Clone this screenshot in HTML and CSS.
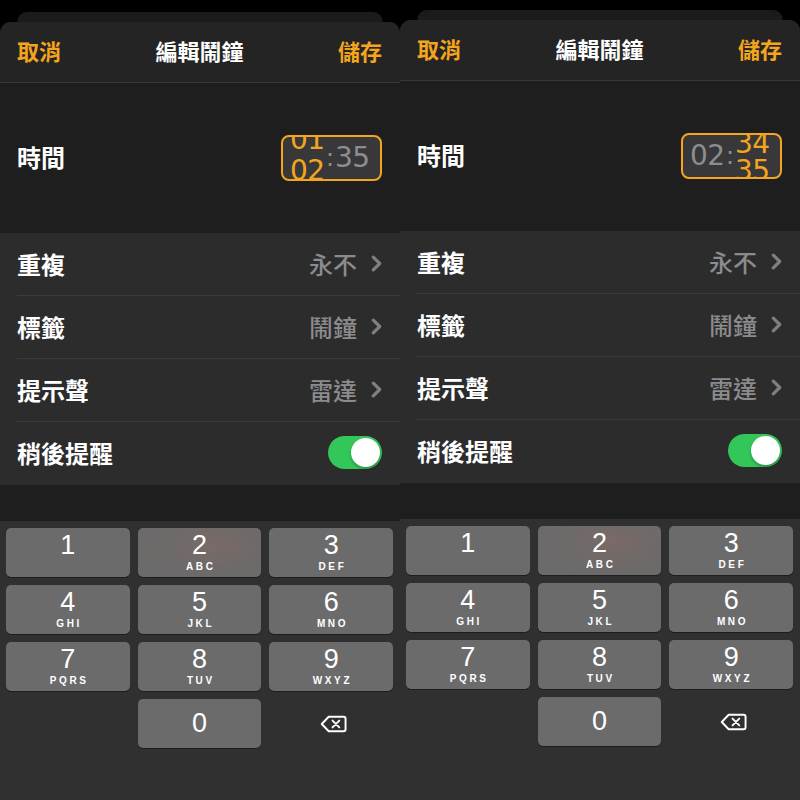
FILE: index.html
```html
<!DOCTYPE html>
<html lang="zh-Hant">
<head>
<meta charset="utf-8">
<title>編輯鬧鐘</title>
<link rel="stylesheet" href="styles.css">
</head>
<body>
<div class="screens">
  <section class="panel">
    <div class="top"><div class="back-sheet"></div></div>
    <div class="sheet">
      <header class="nav">
        <span class="nav-btn">取消</span>
        <span class="nav-title">編輯鬧鐘</span>
        <span class="nav-btn">儲存</span>
      </header>
      <div class="time-row">
        <span class="label">時間</span>
        <div class="picker">
          <div class="col col-scroll hours-left"><span>01</span><span>02</span></div>
          <span class="colon">:</span>
          <div class="col static">35</div>
        </div>
      </div>
      <ul class="list">
        <li class="row"><span class="label">重複</span><span class="value">永不<svg class="chev" viewBox="0 0 10 16"><polyline points="2,2 8,8 2,14"/></svg></span></li>
        <li class="row"><span class="label">標籤</span><span class="value">鬧鐘<svg class="chev" viewBox="0 0 10 16"><polyline points="2,2 8,8 2,14"/></svg></span></li>
        <li class="row"><span class="label">提示聲</span><span class="value">雷達<svg class="chev" viewBox="0 0 10 16"><polyline points="2,2 8,8 2,14"/></svg></span></li>
        <li class="row"><span class="label">稍後提醒</span><span class="toggle"><span class="knob"></span></span></li>
      </ul>
      <div class="band"></div>
      <div class="keyboard">
        <div class="key"><span class="d">1</span><span class="l"></span></div>
        <div class="key hot"><span class="d">2</span><span class="l">ABC</span></div>
        <div class="key"><span class="d">3</span><span class="l">DEF</span></div>
        <div class="key"><span class="d">4</span><span class="l">GHI</span></div>
        <div class="key"><span class="d">5</span><span class="l">JKL</span></div>
        <div class="key"><span class="d">6</span><span class="l">MNO</span></div>
        <div class="key"><span class="d">7</span><span class="l">PQRS</span></div>
        <div class="key"><span class="d">8</span><span class="l">TUV</span></div>
        <div class="key"><span class="d">9</span><span class="l">WXYZ</span></div>
        <div class="key blank"></div>
        <div class="key zero"><span class="d">0</span></div>
        <div class="key del"><svg viewBox="0 0 28 18"><path d="M9 1.5 H24.5 a2 2 0 0 1 2 2 V14.5 a2 2 0 0 1 -2 2 H9 L1.8 9 Z"/><path d="M13 5.5 L20 12.5 M20 5.5 L13 12.5"/></svg></div>
      </div>
    </div>
  </section>

  <section class="panel shifted">
    <div class="top"><div class="back-sheet"></div></div>
    <div class="sheet">
      <header class="nav">
        <span class="nav-btn">取消</span>
        <span class="nav-title">編輯鬧鐘</span>
        <span class="nav-btn">儲存</span>
      </header>
      <div class="time-row">
        <span class="label">時間</span>
        <div class="picker">
          <div class="col static">02</div>
          <span class="colon">:</span>
          <div class="col col-scroll mins-right"><span>34</span><span>35</span></div>
        </div>
      </div>
      <ul class="list">
        <li class="row"><span class="label">重複</span><span class="value">永不<svg class="chev" viewBox="0 0 10 16"><polyline points="2,2 8,8 2,14"/></svg></span></li>
        <li class="row"><span class="label">標籤</span><span class="value">鬧鐘<svg class="chev" viewBox="0 0 10 16"><polyline points="2,2 8,8 2,14"/></svg></span></li>
        <li class="row"><span class="label">提示聲</span><span class="value">雷達<svg class="chev" viewBox="0 0 10 16"><polyline points="2,2 8,8 2,14"/></svg></span></li>
        <li class="row"><span class="label">稍後提醒</span><span class="toggle"><span class="knob"></span></span></li>
      </ul>
      <div class="band"></div>
      <div class="keyboard">
        <div class="key"><span class="d">1</span><span class="l"></span></div>
        <div class="key hot"><span class="d">2</span><span class="l">ABC</span></div>
        <div class="key"><span class="d">3</span><span class="l">DEF</span></div>
        <div class="key"><span class="d">4</span><span class="l">GHI</span></div>
        <div class="key"><span class="d">5</span><span class="l">JKL</span></div>
        <div class="key"><span class="d">6</span><span class="l">MNO</span></div>
        <div class="key"><span class="d">7</span><span class="l">PQRS</span></div>
        <div class="key"><span class="d">8</span><span class="l">TUV</span></div>
        <div class="key"><span class="d">9</span><span class="l">WXYZ</span></div>
        <div class="key blank"></div>
        <div class="key zero"><span class="d">0</span></div>
        <div class="key del"><svg viewBox="0 0 28 18"><path d="M9 1.5 H24.5 a2 2 0 0 1 2 2 V14.5 a2 2 0 0 1 -2 2 H9 L1.8 9 Z"/><path d="M13 5.5 L20 12.5 M20 5.5 L13 12.5"/></svg></div>
      </div>
    </div>
  </section>
</div>
</body>
</html>
```

FILE: styles.css
```css
* { box-sizing: border-box; margin: 0; padding: 0; }

html, body {
  width: 800px;
  height: 800px;
  overflow: hidden;
  background: #000;
}

body {
  font-family: "Noto Sans CJK TC", "Noto Sans", sans-serif;
  color: #fff;
}

.screens {
  display: flex;
  width: 800px;
  height: 800px;
}

.panel {
  width: 400px;
  height: 800px;
  display: flex;
  flex-direction: column;
  overflow: hidden;
  background: #000;
}

.top {
  height: 22px;
  flex: none;
  padding: 12px 17px 0;
}
.panel.shifted .top {
  height: 20px;
  padding-top: 10px;
}

.back-sheet {
  height: 10px;
  background: #1b1b1b;
  border-radius: 10px 10px 0 0;
}

.sheet {
  flex: 1;
  display: flex;
  flex-direction: column;
  background: #1e1e1e;
  border-radius: 11px 11px 0 0;
  overflow: hidden;
}

.nav {
  height: 61px;
  flex: none;
  display: flex;
  align-items: center;
  justify-content: space-between;
  padding: 0 18px 4px 17px;
  background: #242424;
  border-bottom: 1px solid #393939;
}
.nav-btn {
  color: #f3a51d;
  font-size: 22px;
  font-weight: 700;
}
.nav-title {
  font-size: 22px;
  font-weight: 700;
  color: #fff;
}

.label {
  font-size: 24px;
  font-weight: 700;
  color: #fff;
}

.time-row {
  height: 150px;
  flex: none;
  display: flex;
  align-items: center;
  justify-content: space-between;
  padding: 0 18px 0 17px;
  background: #1e1e1e;
}
.time-row .label { margin-top: -3px; }

.picker {
  width: 101px;
  height: 46px;
  border: 2px solid #f3a51d;
  border-radius: 8px;
  background: #38383a;
  display: flex;
  align-items: center;
  padding-left: 7px;
  overflow: hidden;
  font-family: "DejaVu Sans", sans-serif;
  font-size: 28px;
  color: #8d8d90;
}

.col {
  width: 36px;
  line-height: 30px;
  letter-spacing: -0.5px;
}
.static { margin-top: -1px; }
.col-scroll {
  display: flex;
  flex-direction: column;
  color: #f3a51d;
  align-self: flex-start;
}
.hours-left { margin-top: -13px; line-height: 31px; }
.mins-right { margin-top: -5px; line-height: 27px; }

.colon {
  width: 8px;
  font-size: 24px;
  line-height: 28px;
  text-align: center;
  margin-top: -1px;
  margin-right: 1px;
}

.list {
  list-style: none;
  background: #2c2c2c;
  flex: none;
}
.row {
  height: 63px;
  display: flex;
  align-items: center;
  justify-content: space-between;
  margin-left: 17px;
  padding-right: 18px;
  padding-bottom: 2px;
  border-bottom: 1px solid #3c3c3c;
}
.row:last-child { border-bottom: none; height: 63px; }

.value {
  display: flex;
  align-items: center;
  gap: 14px;
  font-size: 24px;
  font-weight: 500;
  color: #8b8b8e;
}
.chev {
  width: 11px;
  height: 17px;
  fill: none;
  stroke: #7f7f83;
  stroke-width: 3;
  stroke-linecap: round;
  stroke-linejoin: round;
}

.toggle {
  width: 54px;
  height: 33px;
  border-radius: 17px;
  background: #33c659;
  display: flex;
  align-items: center;
  justify-content: flex-end;
  padding-right: 2px;
}
.knob {
  width: 29px;
  height: 29px;
  border-radius: 50%;
  background: #fff;
  box-shadow: 0 2px 3px rgba(0,0,0,0.25);
}

.band {
  height: 36px;
  flex: none;
  background: #1e1e1e;
}

.keyboard {
  flex: 1;
  background: #303030;
  display: grid;
  grid-template-columns: repeat(3, 1fr);
  grid-auto-rows: 49px;
  row-gap: 8px;
  column-gap: 8px;
  padding: 7px 7px 0 6px;
  align-content: start;
}

.key {
  background: #6b6b6b;
  border-radius: 5px;
  box-shadow: 0 1px 0 #1d1d1d;
  display: flex;
  flex-direction: column;
  align-items: center;
  font-family: "Liberation Sans", Arial, sans-serif;
}
.key.hot {
  background: radial-gradient(ellipse 70% 90% at 62% 35%, #7a6a67 0%, #6d6a69 55%, #6b6b6b 100%);
}
.key .d {
  font-size: 27px;
  line-height: 32px;
  margin-top: 1px;
  color: #fff;
}
.key .l {
  font-size: 10px;
  font-weight: 700;
  letter-spacing: 2.6px;
  margin-left: 2.6px;
  line-height: 11px;
  margin-top: 0;
  color: #fff;
}
.key.zero { justify-content: center; }
.key.zero .d { margin-top: -1px; }
.key.blank, .key.del {
  background: transparent;
  box-shadow: none;
}
.key.del {
  justify-content: center;
}
.key.del svg {
  width: 27px;
  height: 18px;
  margin-left: 4px;
  fill: none;
  stroke: #fff;
  stroke-width: 2;
  stroke-linejoin: round;
  stroke-linecap: round;
}
```
